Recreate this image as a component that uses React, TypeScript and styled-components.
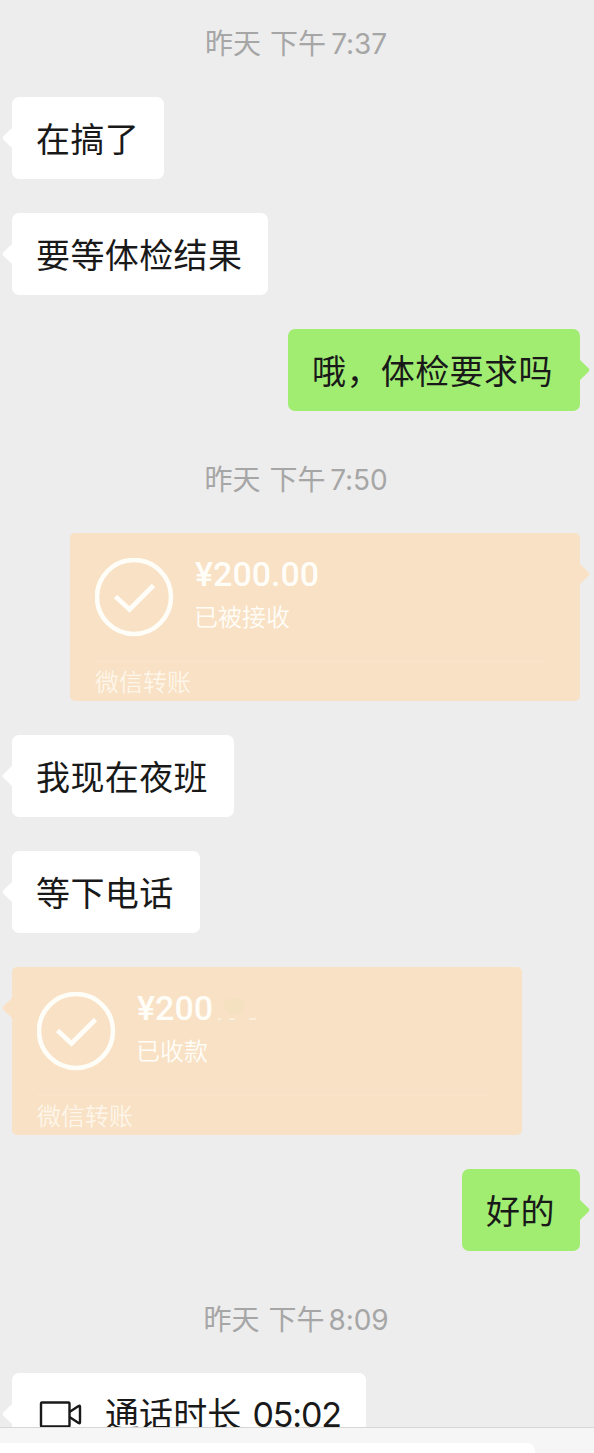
import React from 'react'
import styled, { createGlobalStyle } from 'styled-components'

const colors = {
    page: '#ededed',
    white: '#ffffff',
    green: '#a0ed72',
    orange: '#f8e1c4',
    gray: '#a6a6a6',
    text: '#191919',
    cream: '#fffdf8'
}

type Side = 'left' | 'right'

const GlobalStyle = createGlobalStyle`
    body {
        margin: 0;
        background: ${colors.page};
        font-family: Inter, "Noto Sans CJK SC", sans-serif;
    }
`

const Screen = styled.div`
    display: flex;
    flex-direction: column;
    width: 594px;
    height: 1453px;
    overflow: hidden;
    background: ${colors.page};
`

const Messages = styled.div`
    flex: 1;
    min-height: 0;
    display: flex;
    flex-direction: column;
    gap: 34px;
    overflow: hidden;
`

const Time = styled.div<{ $width: number; $first?: boolean }>`
    flex: none;
    display: flex;
    box-sizing: border-box;
    width: ${({ $width }) => $width}px;
    height: ${({ $first }) => $first ? 63 : 54}px;
    padding-top: ${({ $first }) => $first ? 24 : 15}px;
    margin: 0 auto;
    transform: translateX(-1px);
    color: ${colors.gray};
    font-size: 28px;
    line-height: 40px;
    white-space: nowrap;
`

const Day = styled.span`
    margin-right: 9px;
`

const Clock = styled.span`
    margin-left: auto;
    letter-spacing: -0.1px;
`

const Row = styled.div<{ $side: Side }>`
    flex: none;
    display: flex;
    justify-content: ${({ $side }) => $side === 'left' ? 'flex-start' : 'flex-end'};
    padding: 0 14px 0 12px;
`

const Bubble = styled.div<{ $side: Side; $color: string; $width: number }>`
    position: relative;
    box-sizing: border-box;
    width: ${({ $width }) => $width}px;
    border-radius: 7px;
    background: ${({ $color }) => $color};
`

const TextBubble = styled(Bubble)<{ $call?: boolean }>`
    display: flex;
    align-items: center;
    height: 82px;
    padding: ${({ $call }) => $call ? 1 : 3}px 24px 0 24px;
    color: ${colors.text};
    font-size: 34px;
    letter-spacing: ${({ $call }) => $call ? 0.1 : 0.4}px;
    line-height: 50px;
    white-space: nowrap;
`

const CardBubble = styled(Bubble)`
    display: flex;
    flex-direction: column;
    height: 168px;
    padding: 25px 25px 0;
    border-radius: 5px;
    color: ${colors.cream};
`

const Arrow = styled.svg<{ $side: Side }>`
    position: absolute;
    top: 29px;
    ${({ $side }) => $side === 'left' ? 'left: -10px;' : 'right: -10px; transform: scaleX(-1);'}
`

const CardMain = styled.div`
    display: flex;
    gap: 21px;
    height: 102px;
`

const CardInfo = styled.div`
    display: flex;
    flex-direction: column;
`

const Amount = styled.div`
    display: flex;
    align-items: center;
    height: 31px;
    font-family: Roboto, sans-serif;
    font-size: 34px;
    font-weight: 500;
    letter-spacing: 0;
`

const Status = styled.div`
    margin-top: 12px;
    margin-left: -1px;
    font-size: 24px;
    font-weight: 350;
    line-height: 34px;
`

const CardFooter = styled.div`
    width: 450px;
    border-top: 2px solid #f9e4ca;
    padding-top: 4px;
    font-size: 24px;
    font-weight: 350;
    line-height: 34px;
    color: #fef6ea;
`

const CallIcon = styled.svg`
    flex: none;
    margin: 0 22px 0 3px;
`

const Duration = styled.span`
    margin-left: 11px;
    letter-spacing: -1.1px;
`

const InputBar = styled.div`
    flex: none;
    box-sizing: border-box;
    height: 26px;
    padding-top: 15px;
    border-top: 1px solid #d6d6d6;
    background: #f6f6f6;
`

const InputField = styled.div`
    width: 535px;
    height: 20px;
    border-top-right-radius: 8px;
    background: ${colors.white};
`

interface MessageProps {
    text: string
    width: number
    side?: Side
    duration?: string
}

interface TransferProps {
    amount: string
    status: string
    side: Side
    smudge?: boolean
}

const BubbleArrow = ({ side, color }: { side: Side; color: string }) => (
    <Arrow $side={side} width="11" height="24" viewBox="0 0 11 24">
        <path d="M11 1 L1.2 10.6 Q0 12 1.2 13.4 L11 23 Z" fill={color} />
    </Arrow>
)

const Message = ({ text, width, side = 'left', duration }: MessageProps) => {
    const color = side === 'left' ? colors.white : colors.green
    return (
        <Row $side={side}>
            <TextBubble $side={side} $color={color} $width={width} $call={!!duration}>
                <BubbleArrow side={side} color={color} />
                {!!duration &&
                    <CallIcon width="44" height="28" viewBox="0 0 44 28" fill="none" stroke={colors.text} strokeWidth="2.4" strokeLinejoin="round">
                        <rect x="2" y="1.5" width="28.5" height="24" rx="1" />
                        <path d="M30.5 11 L39.6 5 Q41 4.4 41 5.8 V21.2 Q41 22.6 39.6 22 L30.5 16" />
                    </CallIcon>
                }
                <span>{text}</span>
                {!!duration && <Duration>{duration}</Duration>}
            </TextBubble>
        </Row>
    )
}

const Transfer = ({ amount, status, side, smudge }: TransferProps) => (
    <Row $side={side}>
        <CardBubble $side={side} $color={colors.orange} $width={510}>
            <BubbleArrow side={side} color={colors.orange} />
            <CardMain>
                <svg width="79" height="79" viewBox="0 0 79 79" fill="none" stroke={colors.cream}>
                    <circle cx="39" cy="39" r="37" strokeWidth="4.6" />
                    <path d="M20.5 38.5 L34.5 51.5 L58.5 27.5" strokeWidth="4.8" />
                </svg>
                <CardInfo>
                    <Amount>
                        {amount}
                        {smudge &&
                            <svg width="50" height="30" viewBox="0 0 50 30">
                                <ellipse cx="21" cy="13" rx="10" ry="8" fill="#eee1bb" opacity="0.35" />
                                <path d="M5 26 h3 M16 26 h6 M36 26 h7" stroke="#faeedd" strokeWidth="2" />
                            </svg>
                        }
                    </Amount>
                    <Status>{status}</Status>
                </CardInfo>
            </CardMain>
            <CardFooter>微信转账</CardFooter>
        </CardBubble>
    </Row>
)

const TimeLabel = ({ time, width, first }: { time: string; width: number; first?: boolean }) => (
    <Time $width={width} $first={first}>
        <Day>昨天</Day>
        <span>下午</span>
        <Clock>{time}</Clock>
    </Time>
)

const App = () => {
    return (
        <Screen>
            <GlobalStyle />
            <Messages>
                <TimeLabel time="7:37" width={182} first />
                <Message text="在搞了" width={152} />
                <Message text="要等体检结果" width={256} />
                <Message text="哦，体检要求吗" width={292} side="right" />
                <TimeLabel time="7:50" width={183} />
                <Transfer amount="¥200.00" status="已被接收" side="right" />
                <Message text="我现在夜班" width={222} />
                <Message text="等下电话" width={188} />
                <Transfer amount="¥200" status="已收款" side="left" smudge />
                <Message text="好的" width={118} side="right" />
                <TimeLabel time="8:09" width={185} />
                <Message text="通话时长" width={354} duration="05:02" />
            </Messages>
            <InputBar>
                <InputField />
            </InputBar>
        </Screen>
    )
}

export default App
